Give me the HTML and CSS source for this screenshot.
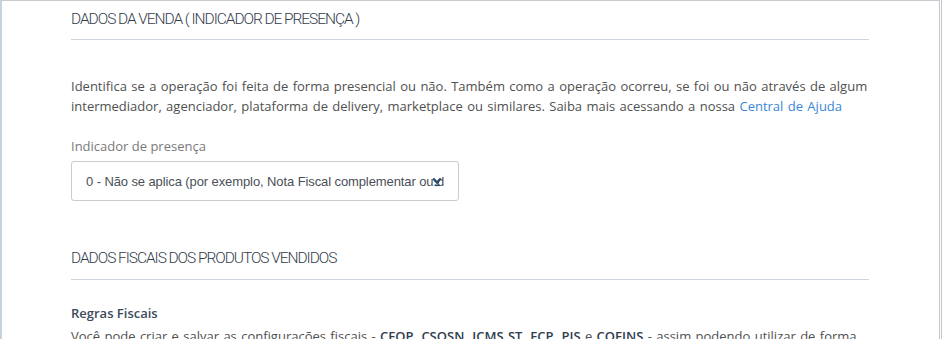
FILE: index.html
```html
<!DOCTYPE html>
<html lang="pt-BR">
<head>
<meta charset="utf-8">
<title>Dados da venda</title>
<link rel="stylesheet" href="styles.css">
</head>
<body>
<div class="frame">
  <div class="content">
    <h2 class="section-title">DADOS DA VENDA ( INDICADOR DE PRESENÇA )</h2>
    <p class="intro">Identifica se a operação foi feita de forma presencial ou não. Também como a operação ocorreu, se foi ou não através de algum intermediador, agenciador, plataforma de delivery, marketplace ou similares. Saiba mais acessando a nossa <a class="link" href="#">Central de Ajuda</a></p>
    <label class="field-label">Indicador de presença</label>
    <div class="select">
      <span class="select-value">0 - Não se aplica (por exemplo, Nota Fiscal complementar ou de ajuste)</span>
      <svg class="select-arrow" width="10" height="10" viewBox="0 0 10 10"><path d="M1.2 1.5 L5 5.5 L8.8 1.5" fill="none" stroke="#2c4660" stroke-width="2.4"/><path d="M2.5 8.3 L7.5 8.3" stroke="#2c4660" stroke-width="1.6"/></svg>
    </div>
    <h2 class="section-title second">DADOS FISCAIS DOS PRODUTOS VENDIDOS</h2>
    <h3 class="sub-title">Regras Fiscais</h3>
    <p class="body-text">Você pode criar e salvar as configurações fiscais - <b>CFOP, CSOSN, ICMS ST, FCP, PIS</b> e <b>COFINS</b> - assim podendo utilizar de forma prática em todas as suas vendas.</p>
  </div>
</div>
</body>
</html>
```
FILE: styles.css
```css
html, body {
  margin: 0;
  padding: 0;
  background: #ffffff;
}
body {
  border-right: 1px solid #c4c8cc;
  height: 339px;
  overflow: hidden;
  box-sizing: border-box;
  font-family: "Open Sans", "Liberation Sans", Arial, sans-serif;
}
.frame {
  margin-right: 1px;
  border-top: 1px solid #c8cbcf;
  border-left: 2px solid #c6d2df;
  border-right: 1px solid #c4c8cc;
  height: 400px;
}
.content {
  width: 798px;
  padding-left: 69px;
}
.section-title {
  margin: 0;
  padding: 8px 0 10px;
  font-family: Roboto, "Liberation Sans", sans-serif;
  font-weight: 300;
  font-size: 15.5px;
  letter-spacing: -1.05px;
  line-height: 20px;
  color: #343d4b;
  border-bottom: 1px solid #cdd4dc;
}
.section-title.second {
  margin-top: 39px;
  padding-bottom: 11px;
}
.intro {
  margin: 36px 0 0;
  font-size: 13px;
  line-height: 20px;
  word-spacing: 1px;
  color: #505050;
}
.link {
  color: #3a86d8;
  text-decoration: none;
}
.field-label {
  display: block;
  margin-top: 21px;
  font-size: 13px;
  line-height: 18px;
  color: #7a7a7a;
}
.select {
  position: relative;
  margin-top: 6px;
  width: 388px;
  height: 40px;
  box-sizing: border-box;
  border: 1px solid #c9ccd0;
  border-radius: 3px;
  padding: 0 14px;
  display: flex;
  align-items: center;
}
.select-value {
  display: block;
  width: 360px;
  overflow: hidden;
  white-space: nowrap;
  font-family: "Liberation Sans", Arial, sans-serif;
  font-size: 13px;
  letter-spacing: -0.1px;
  color: #4a4f57;
}
.select-arrow {
  position: absolute;
  right: 16px;
  top: 15px;
}
.sub-title {
  margin: 24px 0 0;
  font-size: 13px;
  line-height: 18px;
  font-weight: 600;
  color: #3c4a5c;
}
.body-text {
  margin: 4px 0 0;
  font-size: 13px;
  line-height: 20px;
  word-spacing: 1px;
  color: #505050;
}
.body-text b {
  font-weight: 600;
  color: #2f3d4f;
}
```
